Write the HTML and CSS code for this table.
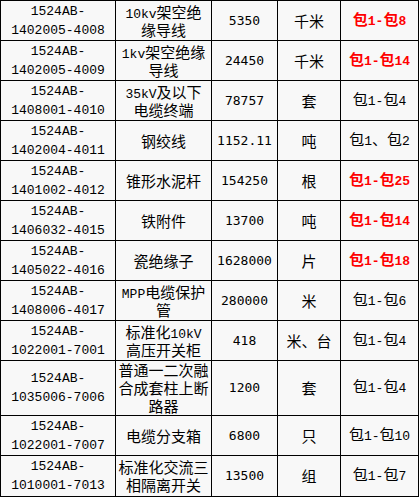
FILE: index.html
```html
<!DOCTYPE html>
<html lang="zh">
<head>
<meta charset="utf-8">
<title>物资清单</title>
<link rel="stylesheet" href="styles.css">
</head>
<body>
<div class="grid">
  <div class="c id"><p class="t">1524AB-<br>1402005-4008</p></div>
  <div class="c name"><p class="t"><span class="l">10kv</span>架空绝<br>缘导线</p></div>
  <div class="c num"><p class="t">5350</p></div>
  <div class="c unit"><p class="t">千米</p></div>
  <div class="c pkg red"><p class="t"><span class="h">包</span>1-<span class="h">包</span>8</p></div>

  <div class="c id"><p class="t">1524AB-<br>1402005-4009</p></div>
  <div class="c name"><p class="t"><span class="l">1kv</span>架空绝缘<br>导线</p></div>
  <div class="c num"><p class="t">24450</p></div>
  <div class="c unit"><p class="t">千米</p></div>
  <div class="c pkg red"><p class="t"><span class="h">包</span>1-<span class="h">包</span>14</p></div>

  <div class="c id"><p class="t">1524AB-<br>1408001-4010</p></div>
  <div class="c name"><p class="t"><span class="l">35kV</span>及以下<br>电缆终端</p></div>
  <div class="c num"><p class="t">78757</p></div>
  <div class="c unit"><p class="t">套</p></div>
  <div class="c pkg"><p class="t"><span class="h">包</span>1-<span class="h">包</span>4</p></div>

  <div class="c id"><p class="t">1524AB-<br>1402004-4011</p></div>
  <div class="c name"><p class="t">钢绞线</p></div>
  <div class="c num"><p class="t">1152.11</p></div>
  <div class="c unit"><p class="t">吨</p></div>
  <div class="c pkg"><p class="t"><span class="h">包</span>1<span class="h">、包</span>2</p></div>

  <div class="c id"><p class="t">1524AB-<br>1401002-4012</p></div>
  <div class="c name"><p class="t">锥形水泥杆</p></div>
  <div class="c num"><p class="t">154250</p></div>
  <div class="c unit"><p class="t">根</p></div>
  <div class="c pkg red"><p class="t"><span class="h">包</span>1-<span class="h">包</span>25</p></div>

  <div class="c id"><p class="t">1524AB-<br>1406032-4015</p></div>
  <div class="c name"><p class="t">铁附件</p></div>
  <div class="c num"><p class="t">13700</p></div>
  <div class="c unit"><p class="t">吨</p></div>
  <div class="c pkg red"><p class="t"><span class="h">包</span>1-<span class="h">包</span>14</p></div>

  <div class="c id"><p class="t">1524AB-<br>1405022-4016</p></div>
  <div class="c name"><p class="t">瓷绝缘子</p></div>
  <div class="c num"><p class="t">1628000</p></div>
  <div class="c unit"><p class="t">片</p></div>
  <div class="c pkg red"><p class="t"><span class="h">包</span>1-<span class="h">包</span>18</p></div>

  <div class="c id"><p class="t">1524AB-<br>1408006-4017</p></div>
  <div class="c name"><p class="t"><span class="l">MPP</span>电缆保护<br>管</p></div>
  <div class="c num"><p class="t">280000</p></div>
  <div class="c unit"><p class="t">米</p></div>
  <div class="c pkg"><p class="t"><span class="h">包</span>1-<span class="h">包</span>6</p></div>

  <div class="c id"><p class="t">1524AB-<br>1022001-7001</p></div>
  <div class="c name"><p class="t">标准化<span class="l">10kV</span><br>高压开关柜</p></div>
  <div class="c num"><p class="t">418</p></div>
  <div class="c unit"><p class="t">米、台</p></div>
  <div class="c pkg"><p class="t"><span class="h">包</span>1-<span class="h">包</span>4</p></div>

  <div class="c id"><p class="t">1524AB-<br>1035006-7006</p></div>
  <div class="c name"><p class="t">普通一二次融<br>合成套柱上断<br>路器</p></div>
  <div class="c num"><p class="t">1200</p></div>
  <div class="c unit"><p class="t">套</p></div>
  <div class="c pkg"><p class="t"><span class="h">包</span>1-<span class="h">包</span>4</p></div>

  <div class="c id"><p class="t">1524AB-<br>1022001-7007</p></div>
  <div class="c name"><p class="t">电缆分支箱</p></div>
  <div class="c num"><p class="t">6800</p></div>
  <div class="c unit"><p class="t">只</p></div>
  <div class="c pkg"><p class="t"><span class="h">包</span>1-<span class="h">包</span>10</p></div>

  <div class="c id"><p class="t">1524AB-<br>1010001-7013</p></div>
  <div class="c name"><p class="t">标准化交流三<br>相隔离开关</p></div>
  <div class="c num"><p class="t">13500</p></div>
  <div class="c unit"><p class="t">组</p></div>
  <div class="c pkg"><p class="t"><span class="h">包</span>1-<span class="h">包</span>7</p></div>
</div>
</body>
</html>
```

FILE: styles.css
```css
html, body {
  margin: 0;
  padding: 0;
  background: #ffffff;
}

.grid {
  display: grid;
  grid-template-columns: 114px 95px 65px 62px 77px;
  grid-template-rows: repeat(9, 39px) 54px 39px 40px;
  gap: 1px;
  padding: 1px;
  background: #000000;
  width: max-content;
}

.c {
  background: #f8f8f8;
  color: #000000;
  display: flex;
  align-items: center;
  justify-content: center;
  text-align: center;
  white-space: nowrap;
  overflow: hidden;
}

.t {
  margin: 0;
}

.id {
  font-family: "Liberation Mono", "DejaVu Sans Mono", monospace;
  font-size: 13px;
  line-height: 19px;
}

.name,
.unit {
  font-family: "Noto Sans CJK SC", "Noto Sans", sans-serif;
  font-size: 15px;
  line-height: 18px;
}

.l {
  font-family: "Liberation Mono", "DejaVu Sans Mono", monospace;
  font-size: 13px;
  line-height: 1;
}

.num {
  font-family: "DejaVu Sans Mono", "Liberation Mono", monospace;
  font-size: 13px;
  line-height: 18px;
}

.pkg {
  font-family: "Liberation Mono", "DejaVu Sans Mono", monospace;
  font-size: 13px;
  line-height: 18px;
}

.h {
  font-family: "Noto Sans CJK SC", "Noto Sans", sans-serif;
  font-size: 15px;
  line-height: 1;
}

.red {
  color: #ff0000;
  font-weight: bold;
}
```
